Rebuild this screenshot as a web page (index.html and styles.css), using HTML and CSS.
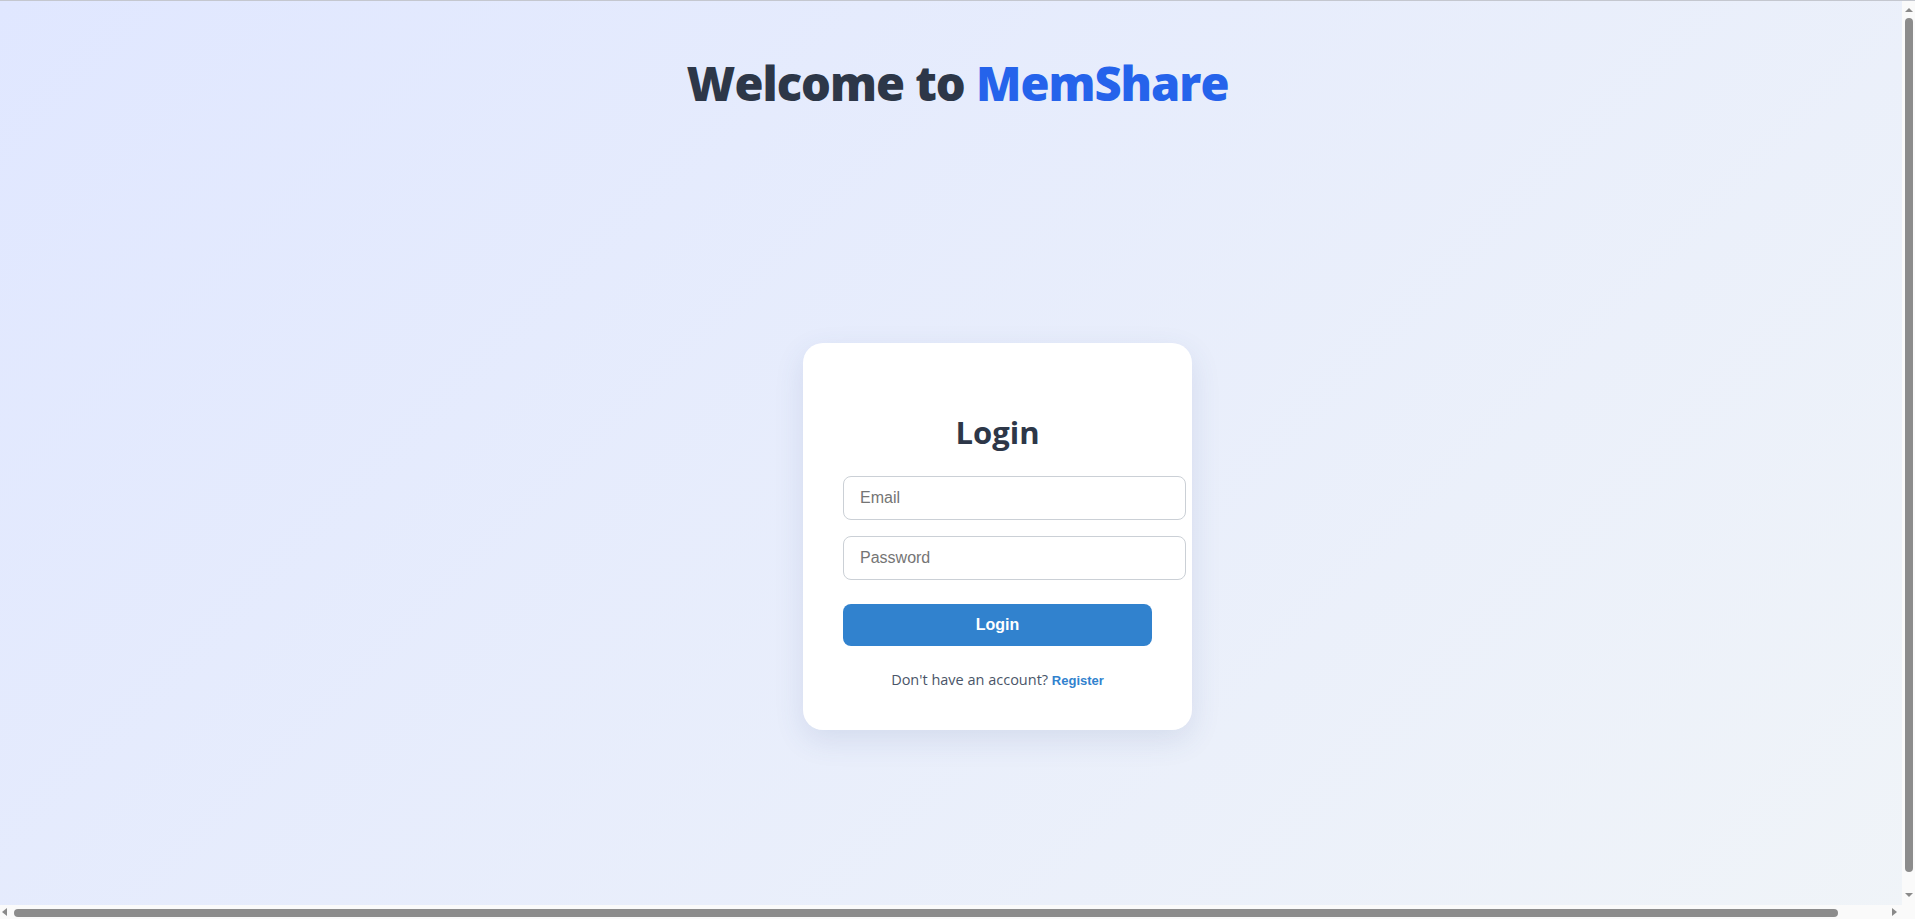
FILE: index.html
```html
<!DOCTYPE html>
<html lang="en">
<head>
<meta charset="utf-8">
<title>MemShare - Login</title>
<link rel="stylesheet" href="styles.css">
</head>
<body>
<div class="app">
  <header class="header">
    <h1 class="title">Welcome to <span class="brand">MemShare</span></h1>
  </header>
  <main class="auth">
    <div class="card">
      <h2 class="card-title">Login</h2>
      <form class="form">
        <input class="field" type="email" placeholder="Email">
        <input class="field" type="password" placeholder="Password">
        <button class="submit" type="button">Login</button>
      </form>
      <p class="switch">Don't have an account? <button class="link" type="button">Register</button></p>
    </div>
  </main>
</div>
<div class="scroll-v" aria-hidden="true">
  <span class="arrow arrow-up"></span>
  <span class="thumb thumb-v"></span>
  <span class="arrow arrow-down"></span>
</div>
<div class="scroll-h" aria-hidden="true">
  <span class="arrow arrow-left"></span>
  <span class="thumb thumb-h"></span>
  <span class="arrow arrow-right"></span>
</div>
<div class="scroll-corner" aria-hidden="true"></div>
</body>
</html>
```
FILE: styles.css
```css
html, body {
  margin: 0;
  padding: 0;
}
body {
  background: linear-gradient(135deg, #e0e7ff 0%, #f0f4f8 100%);
  font-family: "Open Sans", "Noto Sans", sans-serif;
  color: #2d3748;
  overflow: hidden;
}
.app {
  border-top: 1px solid #c4c7cf;
  min-height: 927px;
  display: flex;
  flex-direction: column;
}
.header {
  height: 143px;
  text-align: center;
}
.title {
  margin: 0;
  padding-top: 54px;
  font-size: 47px;
  line-height: 56px;
  font-weight: 800;
  letter-spacing: -1px;
  color: #2d3748;
}
.brand {
  color: #2563eb;
}
.auth {
  flex: 1;
  box-sizing: border-box;
  width: 100%;
  padding-left: 80px;
  display: flex;
  justify-content: center;
  align-items: center;
}
.card {
  width: 309px;
  padding: 40px;
  background: #ffffff;
  border-radius: 20px;
  box-shadow: 0 10px 30px rgba(60, 80, 140, 0.12);
}
.card-title {
  margin: 29px 0 24px;
  text-align: center;
  font-size: 31px;
  line-height: 40px;
  font-weight: 700;
  color: #2d3748;
}
.form {
  display: flex;
  flex-direction: column;
}
.field {
  width: 100%;
  box-sizing: content-box;
  margin: 0 0 16px;
  padding: 12px 16px;
  border: 1px solid #cbd0d6;
  border-radius: 8px;
  font-family: "Liberation Sans", Arial, sans-serif;
  font-size: 16px;
  line-height: 18px;
  color: #2d3748;
  background: #fff;
  outline: none;
}
.field::placeholder {
  color: #757575;
}
.field + .field {
  margin-bottom: 24px;
}
.submit {
  height: 42px;
  width: 100%;
  border: none;
  border-radius: 8px;
  background: #3182ce;
  color: #fff;
  font-family: "Liberation Sans", Arial, sans-serif;
  font-size: 16px;
  font-weight: 700;
  cursor: pointer;
}
.switch {
  margin: 24px 0 0;
  text-align: center;
  font-size: 14.5px;
  line-height: 20px;
  color: #4a5568;
}
.link {
  padding: 0;
  border: none;
  background: none;
  font-family: "Liberation Sans", Arial, sans-serif;
  font-size: 13px;
  font-weight: 700;
  color: #3182ce;
  cursor: pointer;
}

/* simulated browser scrollbars */
.scroll-v {
  position: fixed;
  top: 1px;
  right: 0;
  width: 13px;
  height: 904px;
  box-sizing: border-box;
  padding: 7px 0 8px;
  background: #fafafa;
  display: flex;
  flex-direction: column;
  align-items: center;
}
.scroll-h {
  position: fixed;
  left: 0;
  bottom: 0;
  width: 1902px;
  height: 14px;
  box-sizing: border-box;
  padding: 0 5px 0 2px;
  background: #fafafa;
  display: flex;
  align-items: center;
}
.scroll-corner {
  position: fixed;
  right: 0;
  bottom: 0;
  width: 13px;
  height: 14px;
  background: #fafafa;
}
.arrow {
  width: 0;
  height: 0;
  flex: none;
}
.arrow-up {
  border-left: 4px solid transparent;
  border-right: 4px solid transparent;
  border-bottom: 4px solid #8a8a8a;
}
.arrow-down {
  margin-top: 21px;
  border-left: 4px solid transparent;
  border-right: 4px solid transparent;
  border-top: 4px solid #8a8a8a;
}
.arrow-left {
  border-top: 4px solid transparent;
  border-bottom: 4px solid transparent;
  border-right: 5px solid #8a8a8a;
}
.arrow-right {
  margin-left: 54px;
  border-top: 4px solid transparent;
  border-bottom: 4px solid transparent;
  border-left: 5px solid #8a8a8a;
}
.thumb {
  background: #8c8c8c;
  border-radius: 4px;
  flex: 1;
}
.thumb-v {
  width: 8px;
  margin-top: 6px;
}
.thumb-h {
  height: 8px;
  margin-left: 7px;
  margin-top: 2px;
}
```
